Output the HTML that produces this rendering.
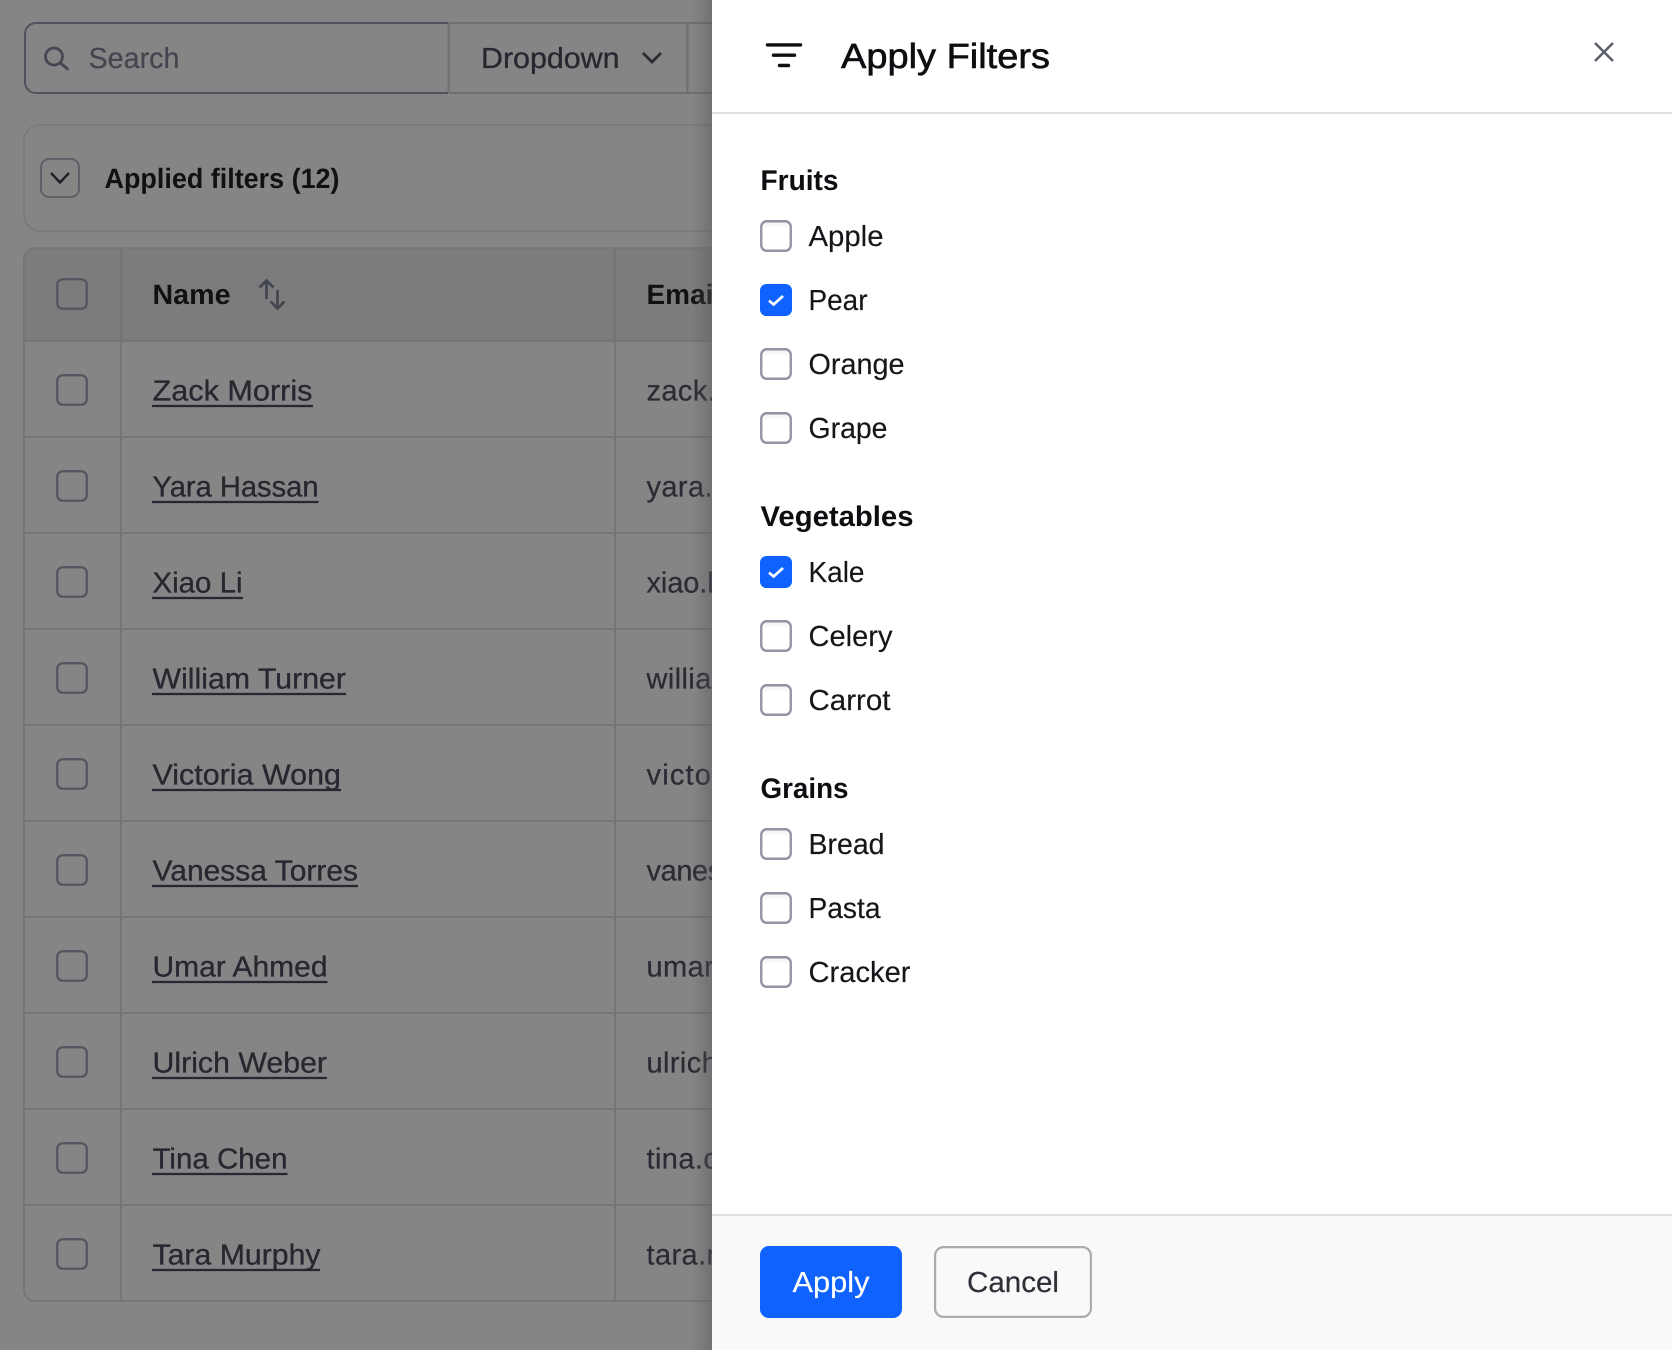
<!DOCTYPE html>
<html lang="en"><head><meta charset="utf-8"><title>Apply Filters</title>
<style>
html,body{margin:0;padding:0;width:1672px;height:1350px;overflow:hidden;background:#858585}
svg{display:block}
text{font-family:"Liberation Sans",sans-serif;font-size:29px;text-rendering:geometricPrecision;white-space:pre}
.n{fill:#26272f;stroke:#26272f;stroke-width:.3px}
.e{fill:#2a2b33;stroke:#2a2b33;stroke-width:.25px;letter-spacing:.4px}
.b{font-weight:700;fill:#111114}
.p{fill:#15151a;stroke:#15151a;stroke-width:.15px}
.h{font-weight:700;fill:#0e0e12;font-size:28.5px}
</style></head><body>
<svg width="1672" height="1350" viewBox="0 0 1672 1350" xmlns="http://www.w3.org/2000/svg">
<defs>
<linearGradient id="sh" x1="0" x2="1" y1="0" y2="0"><stop offset="0" stop-color="#5a5a5e" stop-opacity="0"/><stop offset="1" stop-color="#5a5a5e" stop-opacity=".45"/></linearGradient>
<linearGradient id="cb" x1="0" x2="0" y1="0" y2="1"><stop offset="0" stop-color="#f1f1f4"/><stop offset=".25" stop-color="#fff"/></linearGradient>
<g id="rc"><rect x="1.25" y="1.25" width="29.5" height="29.5" rx="5.5" fill="none" stroke="#54565f" stroke-width="2.3"/></g>
<g id="pc"><rect x="1.25" y="1.25" width="29.5" height="29.5" rx="5.5" fill="url(#cb)" stroke="#9295a6" stroke-width="2.4"/></g>
<g id="pk"><rect width="32" height="32" rx="6.5" fill="#0f62fe"/><path d="M9 16.6 13.6 20.5 23 12" fill="none" stroke="#fff" stroke-width="2.7"/></g>
</defs>

<rect width="1672" height="1350" fill="#858585"/>

<!-- Toolbar -->
<path d="M448.500 23V93M449 23H712M449 93H712M687.500 23V93" fill="none" stroke="#6e6f72" stroke-width="2"/>
<path d="M448 23H36a11 11 0 0 0-11 11v48a11 11 0 0 0 11 11h412" fill="none" stroke="#51535c" stroke-width="2"/>
<circle cx="54" cy="56.500" r="8.500" fill="none" stroke="#444650" stroke-width="2.800"/>
<path d="M60.500 63 67.500 69" fill="none" stroke="#444650" stroke-width="2.800" stroke-linecap="round"/>
<text x="88.500" y="68" textLength="91" lengthAdjust="spacingAndGlyphs" fill="#44464f" stroke="#44464f" stroke-width=".2">Search</text>
<text x="481" y="68" textLength="138.500" lengthAdjust="spacingAndGlyphs" fill="#26272f" stroke="#26272f" stroke-width=".3">Dropdown</text>
<path d="M643 53 652 62 661 53" fill="none" stroke="#2a2b33" stroke-width="2.800"/>

<!-- Applied filters -->
<rect x="24" y="125" width="720" height="106" rx="16" fill="none" stroke="#7a7a7a" stroke-width="1.800"/>
<rect x="41" y="159" width="38" height="38" rx="8" fill="none" stroke="#5f6169" stroke-width="2"/>
<path d="M51 173 60 182.500 69 173" fill="none" stroke="#1f2026" stroke-width="2.400"/>
<text x="104.500" y="188" textLength="235" lengthAdjust="spacingAndGlyphs" class="b" style="font-size:28px">Applied filters (12)</text>

<!-- Table -->
<path d="M24 341V259a11 11 0 0 1 11-11H712V341z" fill="#7c7c7c"/>
<path d="M712 248H35a11 11 0 0 0-11 11V1290a11 11 0 0 0 11 11H712" fill="none" stroke="#757575" stroke-width="1.800"/>
<path d="M24 341H712M24 437H712M24 533H712M24 629H712M24 725H712M24 821H712M24 917H712M24 1013H712M24 1109H712M24 1205H712M121 248V1301M615 248V1301" fill="none" stroke="#747474" stroke-width="1.800"/>

<use href="#rc" x="56" y="278"/>
<text x="152.500" y="304" textLength="78" lengthAdjust="spacingAndGlyphs" class="b" style="font-size:28px">Name</text>
<path d="M266.500 299V281M259.500 287.500 266.500 280.500 273.500 287.500M277.500 290V308.500M270.500 301.500 277.500 308.500 284.500 301.500" fill="none" stroke="#43454f" stroke-width="2.700"/>
<text x="646.500" y="304" class="b" style="font-size:28px">Email</text>

<use href="#rc" x="56" y="374"/><use href="#rc" x="56" y="470"/><use href="#rc" x="56" y="566"/><use href="#rc" x="56" y="662"/><use href="#rc" x="56" y="758"/><use href="#rc" x="56" y="854"/><use href="#rc" x="56" y="950"/><use href="#rc" x="56" y="1046"/><use href="#rc" x="56" y="1142"/><use href="#rc" x="56" y="1238"/>

<text x="152.500" y="400.500" textLength="160" lengthAdjust="spacingAndGlyphs" class="n">Zack Morris</text>
<text x="152.500" y="496.500" textLength="166" lengthAdjust="spacingAndGlyphs" class="n">Yara Hassan</text>
<text x="152.500" y="592.500" textLength="90" lengthAdjust="spacingAndGlyphs" class="n">Xiao Li</text>
<text x="152.500" y="688.500" textLength="193.500" lengthAdjust="spacingAndGlyphs" class="n">William Turner</text>
<text x="152.500" y="784.500" textLength="188.500" lengthAdjust="spacingAndGlyphs" class="n">Victoria Wong</text>
<text x="152.500" y="880.500" textLength="205.500" lengthAdjust="spacingAndGlyphs" class="n">Vanessa Torres</text>
<text x="152.500" y="976.500" textLength="175" lengthAdjust="spacingAndGlyphs" class="n">Umar Ahmed</text>
<text x="152.500" y="1072.500" textLength="174.500" lengthAdjust="spacingAndGlyphs" class="n">Ulrich Weber</text>
<text x="152.500" y="1168.500" textLength="135" lengthAdjust="spacingAndGlyphs" class="n">Tina Chen</text>
<text x="152.500" y="1264.500" textLength="168" lengthAdjust="spacingAndGlyphs" class="n">Tara Murphy</text>
<path d="M152 406H313M152 502H318.500M152 598H243M152 694H346M152 790H341M152 886H358M152 982H327.500M152 1078H327M152 1174H287.500M152 1270H320" fill="none" stroke="#26272f" stroke-width="2.200"/>

<text x="646.500" y="400.500" class="e">zack.morris</text>
<text x="646.500" y="496.500" class="e">yara.hassan</text>
<text x="646.500" y="592.500" class="e" style="letter-spacing:-.1px">xiao.li</text>
<text x="646.500" y="688.500" class="e">william.turner</text>
<text x="646.500" y="784.500" class="e" style="letter-spacing:1.200px">victoria.wong</text>
<text x="646.500" y="880.500" class="e" style="letter-spacing:-.4px">vanessa.torres</text>
<text x="646.500" y="976.500" class="e">umar.ahmed</text>
<text x="646.500" y="1072.500" class="e">ulrich.weber</text>
<text x="646.500" y="1168.500" class="e">tina.chen</text>
<text x="646.500" y="1264.500" class="e">tara.murphy</text>

<!-- Panel shadow -->
<rect x="692" y="0" width="20" height="1350" fill="url(#sh)"/>

<!-- Panel -->
<rect x="712" y="0" width="960" height="1350" fill="#fff"/>
<rect x="712" y="112" width="960" height="2" fill="#dedee3"/>
<rect x="712" y="1215" width="960" height="135" fill="#f9f9fa"/>
<rect x="712" y="1214" width="960" height="2" fill="#dedee3"/>

<path d="M767.500 44.900H800.500M773.500 55.200H794.500M779.500 65.500H788.500" fill="none" stroke="#0e0e12" stroke-width="3.400" stroke-linecap="round"/>
<text x="841" y="68" textLength="209" lengthAdjust="spacingAndGlyphs" fill="#0e0e12" stroke="#0e0e12" stroke-width=".6" style="font-size:35px">Apply Filters</text>
<path d="M1595 43 1613 61M1613 43 1595 61" fill="none" stroke="#5c606e" stroke-width="2.600"/>

<text x="760.500" y="190" textLength="78" lengthAdjust="spacingAndGlyphs" class="h">Fruits</text>
<use href="#pc" x="760" y="220"/><text x="808.500" y="246" textLength="75" lengthAdjust="spacingAndGlyphs" class="p">Apple</text>
<use href="#pk" x="760" y="284"/><text x="808.500" y="310" textLength="59" lengthAdjust="spacingAndGlyphs" class="p">Pear</text>
<use href="#pc" x="760" y="348"/><text x="808.500" y="374" textLength="96" lengthAdjust="spacingAndGlyphs" class="p">Orange</text>
<use href="#pc" x="760" y="412"/><text x="808.500" y="438" textLength="79" lengthAdjust="spacingAndGlyphs" class="p">Grape</text>

<text x="760.500" y="526" textLength="153" lengthAdjust="spacingAndGlyphs" class="h">Vegetables</text>
<use href="#pk" x="760" y="556"/><text x="808.500" y="582" textLength="56" lengthAdjust="spacingAndGlyphs" class="p">Kale</text>
<use href="#pc" x="760" y="620"/><text x="808.500" y="646" textLength="84" lengthAdjust="spacingAndGlyphs" class="p">Celery</text>
<use href="#pc" x="760" y="684"/><text x="808.500" y="710" textLength="82" lengthAdjust="spacingAndGlyphs" class="p">Carrot</text>

<text x="760.500" y="798" textLength="88" lengthAdjust="spacingAndGlyphs" class="h">Grains</text>
<use href="#pc" x="760" y="828"/><text x="808.500" y="854" textLength="76" lengthAdjust="spacingAndGlyphs" class="p">Bread</text>
<use href="#pc" x="760" y="892"/><text x="808.500" y="918" textLength="72" lengthAdjust="spacingAndGlyphs" class="p">Pasta</text>
<use href="#pc" x="760" y="956"/><text x="808.500" y="982" textLength="102" lengthAdjust="spacingAndGlyphs" class="p">Cracker</text>

<!-- Footer buttons -->
<rect x="760" y="1246" width="142" height="72" rx="9" fill="#0f62fe"/>
<text x="792.500" y="1292" textLength="77" lengthAdjust="spacingAndGlyphs" fill="#fff" stroke="#fff" stroke-width=".15">Apply</text>
<rect x="935.100" y="1247.100" width="155.800" height="69.800" rx="8.500" fill="#f9f9fa" stroke="#aaaab0" stroke-width="2.200"/>
<text x="967" y="1292" textLength="92" lengthAdjust="spacingAndGlyphs" fill="#2e2f37" stroke="#2e2f37" stroke-width=".2">Cancel</text>
</svg>
</body></html>
